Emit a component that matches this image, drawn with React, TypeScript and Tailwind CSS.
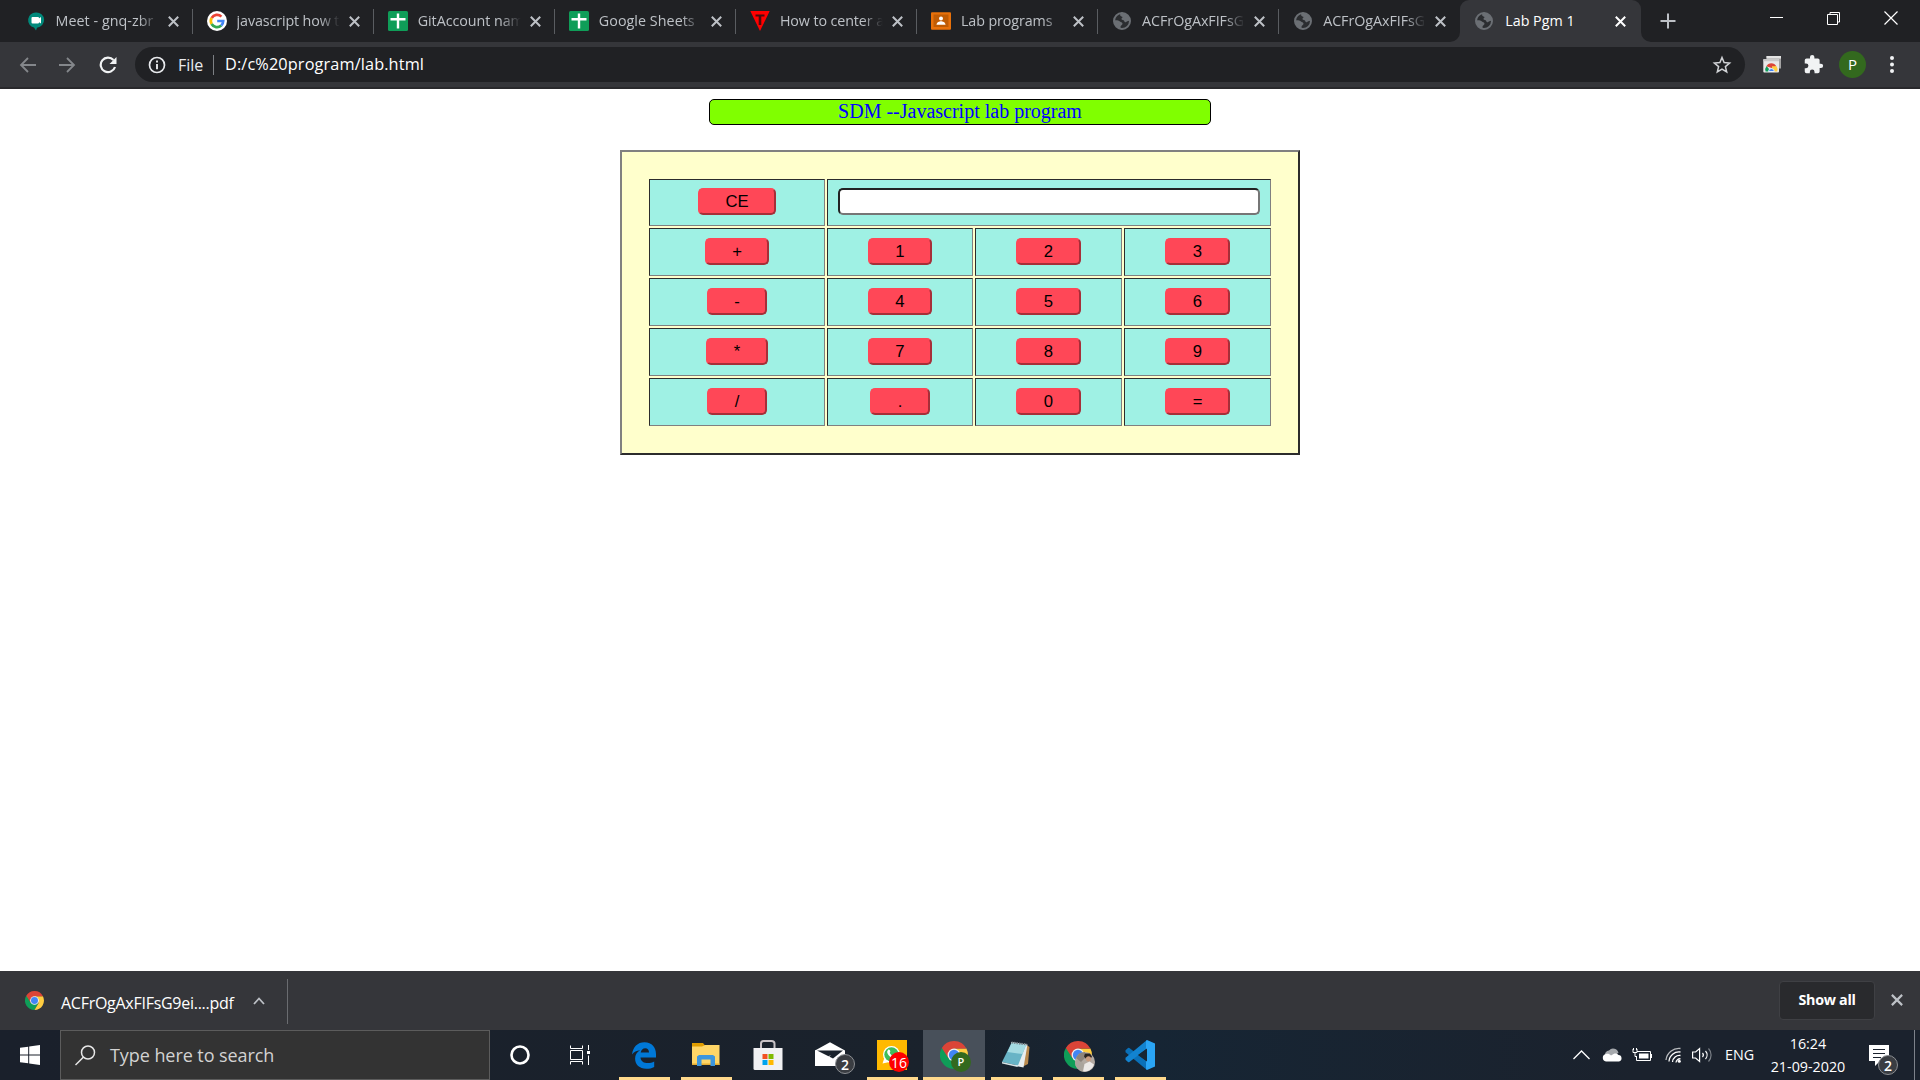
import React from "react";

const ui = "font-['Open_Sans','Noto_Sans',sans-serif]";

function Cross({ size = 11, color = "#bdc1c6", w = 2 }: { size?: number; color?: string; w?: number }) {
  return (
    <svg width={size} height={size} viewBox="0 0 11 11" className="block shrink-0">
      <path d="M.8.8 10.2 10.2M10.2.8.8 10.2" stroke={color} strokeWidth={w} fill="none" />
    </svg>
  );
}

function ChromeLogo({ size }: { size: number }) {
  return (
    <svg width={size} height={size} viewBox="0 0 48 48" className="block">
      <path d="M24 24 3.2 12A24 24 0 0 0 24 48l10-18z" fill="#0f9d58" />
      <path d="M24 13h21.3A24 24 0 0 1 24 48l10.4-18z" fill="#ffcd40" />
      <path d="M3.2 12A24 24 0 0 1 45.3 13H24L14.5 29.5z" fill="#db4437" />
      <circle cx="24" cy="24" r="11" fill="#f1f1f1" />
      <circle cx="24" cy="24" r="8.8" fill="#4285f4" />
    </svg>
  );
}

function MeetIcon() {
  return (
    <svg width="20" height="20" viewBox="0 0 20 20">
      <path d="M10 1.500a7.600 7.600 0 0 0-2 15L10 19.500l1-2.800a7.600 7.600 0 0 0-1-15.200z" fill="#00897b" />
      <path d="M12 8l3-2v6.500l-3-2z" fill="#fff" />
      <rect x="5.500" y="6" width="7.500" height="6.500" rx="1" fill="#fff" />
    </svg>
  );
}

function GoogleIcon() {
  return (
    <svg width="20" height="20" viewBox="0 0 20 20">
      <circle cx="10" cy="10" r="10" fill="#fff" />
      <g fill="none" strokeWidth="2.7">
        <path d="M4.7 7A6.2 6.2 0 0 1 14.4 5.6" stroke="#ea4335" />
        <path d="M4.6 13A6.2 6.2 0 0 1 4.6 7" stroke="#fbbc05" />
        <path d="M14.2 14.5A6.2 6.2 0 0 1 4.6 13" stroke="#34a853" />
        <path d="M10.2 10h6a6.2 6.2 0 0 1-2 4.5" stroke="#4285f4" />
      </g>
    </svg>
  );
}

function SheetsIcon() {
  return (
    <svg width="20" height="20" viewBox="0 0 20 20">
      <rect width="20" height="20" rx="1.5" fill="#0f9d58" />
      <path d="M2.5 8.2h15M10 2.5v15" stroke="#fff" strokeWidth="2.4" />
    </svg>
  );
}

function TriangleIcon() {
  return (
    <svg width="20" height="20" viewBox="0 0 20 20">
      <path d="M.3 0h19.4L10 20z" fill="#f00" />
      <path d="M5.5 3.5h9v2h-3.2v8.5H8.7V5.500H5.500z" fill="#4a0b0d" />
    </svg>
  );
}

function ClassroomIcon() {
  return (
    <svg width="20" height="20" viewBox="0 0 20 20">
      <rect y="1.300" width="20" height="17.500" rx="1" fill="#e8710a" />
      <rect x="2.500" y="3.500" width="15" height="12.500" fill="#c05c04" />
      <circle cx="10" cy="7.500" r="2" fill="#fff" />
      <path d="M5.500 13.800c0-2.500 3-3.500 4.500-3.500s4.500 1 4.500 3.500z" fill="#fff" />
    </svg>
  );
}

function GlobeIcon() {
  return (
    <svg width="20" height="20" viewBox="0 0 20 20">
      <circle cx="10" cy="10" r="8" fill="#2b2d30" stroke="#6b6f74" strokeWidth="2" />
      <path
        d="M9.500 2C13.500 2 17 5 17.800 9c-.8 1.500-2.300.8-3.300 1.800-.9.900-2 .2-2.300-.9C11.800 8.700 10 9.300 9.500 8.200c-.4-1 1.300-1.200 1-2.200-.3-.9-1.800-.5-2.300-1.600C7.800 3.500 8.500 2.500 9.500 2zM2 9c1.800.3 4.800 0 6 1.500.6.900 2.300.6 2.500 1.900.2 1.300-1.300 1.600-1.800 2.500-.4.900.2 2-.5 2.900C4.500 17 1.800 13.500 2 9z"
        fill="#6b6f74"
      />
    </svg>
  );
}

const tabs = [
  { icon: <MeetIcon />, title: "Meet - gnq-zbr", cls: "tracking-[0.05px]" },
  { icon: <GoogleIcon />, title: "javascript how t", cls: "tracking-[-0.12px]" },
  { icon: <SheetsIcon />, title: "GitAccount nam", cls: "tracking-[-0.05px]" },
  { icon: <SheetsIcon />, title: "Google Sheets", cls: "tracking-[0.05px]" },
  { icon: <TriangleIcon />, title: "How to center a", cls: "tracking-[-0.1px]" },
  { icon: <ClassroomIcon />, title: "Lab programs", cls: "tracking-[-0.1px]" },
  { icon: <GlobeIcon />, title: "ACFrOgAxFIFsG", cls: "tracking-[-0.05px]" },
  { icon: <GlobeIcon />, title: "ACFrOgAxFIFsG", cls: "tracking-[-0.05px]" },
];

function TabStrip() {
  return (
    <div className="flex h-[42px] bg-[#202124] pl-[11.500px] text-[14.3px]">
      {tabs.map((t, i) => (
        <div key={i} className="flex h-[42px] w-[181.1px] shrink-0 items-center pl-[14px]">
          <div className="flex w-5 shrink-0 justify-center">{t.icon}</div>
          <div
            className={`-mt-px ml-[10px] w-[106px] shrink-0 overflow-hidden whitespace-nowrap text-[#bdc1c6] [mask-image:linear-gradient(to_right,black_78%,transparent_97%)] ${t.cls}`}
          >
            {t.title}
          </div>
          <div className="ml-[6px]">
            <Cross />
          </div>
          <div className={i < 7 ? "ml-auto h-[25px] w-px bg-[#5a5d61]" : "hidden"} />
        </div>
      ))}
      <div className="relative flex h-[42px] w-[181px] shrink-0 items-center rounded-t-[9px] bg-[#35363a] pl-[14px]">
        <svg className="absolute bottom-0 left-[-10px]" width="10" height="10">
          <path d="M10 0v10H0A10 10 0 0 0 10 0z" fill="#35363a" />
        </svg>
        <svg className="absolute right-[-10px] bottom-0" width="10" height="10">
          <path d="M0 0v10h10A10 10 0 0 1 0 0z" fill="#35363a" />
        </svg>
        <GlobeIcon />
        <div className="-mt-px ml-[11px] w-[110px] whitespace-nowrap text-white">Lab Pgm 1</div>
        <Cross color="#ffffff" />
      </div>
      <svg className="mt-[13px] ml-[19px] shrink-0" width="16" height="16">
        <path d="M8 .5v15M.5 8h15" stroke="#bdc1c6" strokeWidth="2" />
      </svg>
      <div className="mt-[11px] mr-[22px] ml-auto flex gap-[43px]">
        <svg width="14" height="14">
          <path d="M0 6.500h13" stroke="#fff" />
        </svg>
        <svg width="14" height="14">
          <path d="M.5 3.500h10v10h-10zM3 3V1.500h9.500V11H11" stroke="#fff" fill="none" />
        </svg>
        <svg width="14" height="14">
          <path d="M.5.500l13 13M13.500.500l-13 13" stroke="#fff" strokeWidth="1.200" />
        </svg>
      </div>
    </div>
  );
}

function Toolbar() {
  return (
    <div className="flex h-[47px] items-start border-b-2 border-[#29292c] bg-[#35363a] pt-[5px]">
      <div className="flex h-[35px] w-[135px] shrink-0 items-center pl-[19px]">
        <svg width="17" height="16" viewBox="0 0 17 16">
          <path d="M17 8H2M9 1 2 8l7 7" stroke="#84878b" strokeWidth="1.800" fill="none" />
        </svg>
        <svg className="ml-[23px]" width="17" height="16" viewBox="0 0 17 16">
          <path d="M0 8h15M8 1l7 7-7 7" stroke="#84878b" strokeWidth="1.800" fill="none" />
        </svg>
        <svg className="ml-[23px]" width="18" height="18" viewBox="0 0 18 18">
          <path d="M14.500 4A7.300 7.300 0 1 0 16 11" stroke="#f1f3f4" strokeWidth="2.200" fill="none" />
          <path d="M17.500 1v7h-7z" fill="#f1f3f4" />
        </svg>
      </div>
      <div className="flex h-[35px] w-[1610px] shrink-0 items-center rounded-full bg-[#202124] pr-[13px] pl-[13px] text-[16px]">
        <svg width="18" height="18" viewBox="0 0 18 18">
          <circle cx="9" cy="9" r="7.500" stroke="#e8eaed" strokeWidth="1.700" fill="none" />
          <path d="M9 8v5.200M9 4.600v1.900" stroke="#e8eaed" strokeWidth="1.900" />
        </svg>
        <div className="ml-[12px] w-[35px] whitespace-nowrap text-[#e8eaed]">File</div>
        <div className="h-5 w-px bg-[#7d8084]" />
        <div className="ml-[11px] text-[16.300px] tracking-[0.12px] whitespace-nowrap text-white">D:/c%20program/lab.html</div>
        <svg className="ml-auto" width="20" height="20" viewBox="0 0 20 20">
          <path
            d="m10 2.500 2.100 5.100 5.500.4-4.200 3.600 1.300 5.400L10 14.100 5.300 17l1.300-5.400L2.400 8l5.500-.4z"
            stroke="#d0d2d5"
            strokeWidth="1.500"
            fill="none"
          />
        </svg>
      </div>
      <div className="flex h-[35px] items-center">
        <svg className="ml-[18px]" width="18" height="17" viewBox="0 0 18 17">
          <path d="M3.500 0H18v12.500H3.500z" fill="#a3a3a3" />
          <path d="M3.500 0H18v2.500H3.500z" fill="#e4e4e4" />
          <rect x=".3" y="3" width="15.700" height="13.500" rx="1" fill="#e9e9e9" />
          <path d="M.300 3.800q0-.8.8-.8h14q.900 0 .900.800v1.400H.300z" fill="#c9c9c9" />
          <path d="M2.600 15.500a5.800 5.800 0 0 1 1-5.500L8 15.500z" fill="#0f9d58" />
          <path d="M3.300 10.300a5.700 5.700 0 0 1 10 0L8.500 12z" fill="#db4437" />
          <path d="M9 10.300h4.600a5.800 5.800 0 0 1 .6 5.200H9z" fill="#ffcd40" />
          <path d="M5.500 15.500a2.900 2.900 0 1 1 5.800 0z" fill="#4285f4" stroke="#fff" strokeWidth=".8" />
        </svg>
        <svg className="ml-[22px]" width="21" height="21" viewBox="0 0 24 24">
          <path
            d="M20.500 11H19V7a2 2 0 0 0-2-2h-4V3.500a2.500 2.500 0 0 0-5 0V5H4a2 2 0 0 0-2 2v3.800h1.500a2.700 2.700 0 0 1 0 5.400H2V20a2 2 0 0 0 2 2h3.800v-1.500a2.700 2.700 0 0 1 5.400 0V22H17a2 2 0 0 0 2-2v-4h1.500a2.500 2.500 0 0 0 0-5z"
            fill="#f1f3f4"
          />
        </svg>
        <div className="ml-[15px] flex size-[27px] items-center justify-center rounded-full bg-[#33691e] text-[15px] text-white">
          P
        </div>
        <svg className="ml-[24px]" width="4" height="17" viewBox="0 0 4 17">
          <circle cx="2" cy="2" r="2" fill="#f1f3f4" />
          <circle cx="2" cy="8.500" r="2" fill="#f1f3f4" />
          <circle cx="2" cy="15" r="2" fill="#f1f3f4" />
        </svg>
      </div>
    </div>
  );
}

const cellBase =
  "flex justify-center border border-t-[#2c2c2c] border-l-[#2c2c2c] border-r-[#808080] border-b-[#808080] bg-[#9ff1e4]";
const keyBase =
  "h-[27px] rounded-[5px] border-2 border-t-[#ff4757] border-l-[#ff4757] border-r-[#a72e38] border-b-[#a72e38] bg-[#ff4757] text-[16.670px] leading-[22px] text-black text-center";

const keys: [string, string][][] = [
  [["+", "w-[64px]"], ["1", "w-[64px]"], ["2", "w-[65px]"], ["3", "w-[65px]"]],
  [["-", "w-[60px]"], ["4", "w-[64px]"], ["5", "w-[65px]"], ["6", "w-[65px]"]],
  [["*", "w-[62px]"], ["7", "w-[64px]"], ["8", "w-[65px]"], ["9", "w-[65px]"]],
  [["/", "w-[60px]"], [".", "w-[60px]"], ["0", "w-[65px]"], ["=", "w-[65px]"]],
];

function Calculator() {
  return (
    <div className="mx-auto mt-[25px] h-[305px] w-[680px] border-2 border-t-[#808080] border-l-[#808080] border-r-[#2c2c2c] border-b-[#2c2c2c] bg-[#ffffcc] p-[27px] font-['Liberation_Sans',sans-serif]">
      <div className="grid grid-cols-[176px_146px_147px_147px] grid-rows-[47px_48px_48px_48px_48px] gap-[2px]">
        <div className={`${cellBase} pt-[8px]`}>
          <button className={`${keyBase} w-[78px]`}>CE</button>
        </div>
        <div className={`${cellBase} col-span-3 px-[10px] pt-[8px]`}>
          <div className="h-[27px] w-full rounded-[5px] border-2 border-t-[#222] border-l-[#222] border-r-[#767676] border-b-[#767676] bg-white" />
        </div>
        {keys.map((row) =>
          row.map(([k, w]) => (
            <div key={k} className={`${cellBase} pt-[9px]`}>
              <button className={`${keyBase} ${w}`}>{k}</button>
            </div>
          )),
        )}
      </div>
    </div>
  );
}

function DownloadBar() {
  return (
    <div className="flex h-[59px] items-center bg-[#35363a] text-white">
      <div className="-mt-px ml-[25px]">
        <ChromeLogo size={19} />
      </div>
      <div className="mt-[5px] ml-[17px] w-[192px] text-[16px] tracking-[-0.27px] whitespace-nowrap">ACFrOgAxFIFsG9ei....pdf</div>
      <svg width="12" height="8" viewBox="0 0 12 8">
        <path d="M1 7l5-5.500L11 7" stroke="#bdc1c6" strokeWidth="1.800" fill="none" />
      </svg>
      <div className="ml-[22px] mt-[2px] h-[45px] w-px bg-[#6a6c70]" />
      <div className="mr-[16px] ml-auto flex h-[39px] w-24 items-center justify-center rounded-[4px] border border-[#3f4044] bg-[#292a2d] pb-[2px] text-[14.300px] font-bold tracking-[-0.3px]">
        Show all
      </div>
      <div className="mr-[17px] -mt-px">
        <Cross size={12} />
      </div>
    </div>
  );
}

function TaskItem({ children, on, active }: { children?: React.ReactNode; on?: boolean; active?: boolean }) {
  return (
    <div className={`relative flex h-[50px] w-[62px] shrink-0 justify-center ${active ? "bg-[#48505a]" : ""}`}>
      <div className="relative mt-[10px] size-[30px]">{children}</div>
      {on && (
        <div className={`absolute bottom-0 h-[3px] bg-[#ffd98c] ${active ? "inset-x-0" : "inset-x-[5.500px]"}`} />
      )}
    </div>
  );
}

const badge = "absolute flex size-5 items-center justify-center rounded-full text-white";

function Taskbar() {
  return (
    <div className="flex h-[50px] bg-[linear-gradient(90deg,#1a202b,#1a222c_50%,#162534_60%,#1b222d_85%)] text-white">
      <div className="flex w-[60px] shrink-0 items-center justify-center">
        <svg width="20" height="20" viewBox="0 0 20 20">
          <path d="M0 2.800 8.200 1.700v7.800H0zM9.200 1.500 20 0v9.500H9.200zM0 10.500h8.200v7.800L0 17.200zM9.200 10.500H20V20L9.200 18.500z" fill="#fff" />
        </svg>
      </div>
      <div className="flex w-[430px] shrink-0 items-center border border-[#5c5c5c] bg-[#333333] pl-[14px]">
        <svg width="21" height="21" viewBox="0 0 21 21">
          <circle cx="13" cy="7.500" r="6.500" stroke="#e8e8e8" strokeWidth="1.500" fill="none" />
          <path d="M8.300 12.200.500 20" stroke="#e8e8e8" strokeWidth="1.500" />
        </svg>
        <div className="ml-[14px] text-[18px] tracking-[-0.07px] whitespace-nowrap text-[#d2d2d2]">Type here to search</div>
      </div>
      <div className="flex w-[60px] shrink-0 items-center justify-center">
        <svg width="20" height="20">
          <circle cx="10" cy="10" r="8.500" stroke="#fff" strokeWidth="2.600" fill="none" />
        </svg>
      </div>
      <div className="mr-[3px] flex w-[60px] shrink-0 items-center justify-center">
        <svg width="20" height="20" viewBox="0 0 20 20">
          <path d="M.500.500v3h12v-3M.500 19.500v-3h12v3M.500 5.500h12v9H.500zM18.500 0v5M18.500 10.500V20" stroke="#fff" fill="none" />
          <rect x="17" y="6" width="3" height="3" fill="#fff" />
        </svg>
      </div>
      <TaskItem on>
        <svg width="30" height="30" viewBox="0 0 30 30">
          <path
            d="M3 14.500C4 7 8.500 2.200 15.500 2.200c7.500 0 11.500 5.200 11.500 12v3.300H11.500c.3 4 3.500 5.600 7.200 5.600 2.500 0 4.700-.7 6.500-1.700v5.500c-2.100 1.200-4.900 1.900-7.900 1.900-6.800 0-11.200-4-11.200-10.200 0-3.700 1.800-6.700 5-8.400C7.500 10.500 5 12 3 14.500zM11.700 12.500h8.300c0-2.600-1.200-4.300-3.800-4.300-2.400 0-4 1.700-4.500 4.300z"
            fill="#0078d7"
          />
        </svg>
      </TaskItem>
      <TaskItem on>
        <svg width="30" height="30" viewBox="0 0 30 30">
          <path d="M1 3h11l2 2.500V8H1z" fill="#e09d00" />
          <path d="M1 6.500h10L14 5h14.500v20H1z" fill="#ffd667" />
          <path d="M1 23.500h27.500V25H1z" fill="#e5ad31" />
          <path d="M6 26V16.500L8 15h14l2 1.500V26h-4.500v-6.500h-9V26z" fill="#3d96dd" />
        </svg>
      </TaskItem>
      <TaskItem>
        <svg width="30" height="30" viewBox="0 0 30 30">
          <path d="M8 9V3.500Q8 1 10.500 1h8Q21.500 1 21.500 3.500V9" stroke="#c9c3c6" strokeWidth="2" fill="none" />
          <path d="M.500 8h29v22H2Q.500 30 .500 28.500z" fill="#f1f1f3" />
          <path d="M9.500 14h5v5h-5z" fill="#f25022" />
          <path d="M15.500 14h5v5h-5z" fill="#7fba00" />
          <path d="M9.500 20h5v5h-5z" fill="#00a4ef" />
          <path d="M15.500 20h5v5h-5z" fill="#ffb900" />
        </svg>
      </TaskItem>
      <TaskItem>
        <svg width="30" height="30" viewBox="0 0 30 30">
          <path d="M0 10.500 15 2.300l15 8.200V26H0z" fill="#fff" />
          <path d="M2 10.500h26l-10 8z" fill="#1a222c" />
          <path d="M0 10.500 11.500 19 15 15.500" stroke="#fff" strokeWidth="1" fill="none" />
        </svg>
        <span className={`${badge} top-[14px] left-[20px] border border-[#8b8e92] bg-[#3a3d42] text-[14px] font-semibold`}>2</span>
      </TaskItem>
      <TaskItem on>
        <div className="size-[30px] bg-[#ffb900]">
          <svg width="30" height="30" viewBox="0 0 30 30">
            <circle cx="14.500" cy="14.500" r="8.500" fill="#fff" />
            <path d="m5.500 23.500 2-6 5 4.500z" fill="#fff" />
            <circle cx="14.500" cy="14.500" r="7.200" fill="#3fbd5b" />
            <path d="M11 10c1-1 2 0 2.300 1.300.2.800-.8 1.200-.4 1.900.8 1.300 1.800 2.200 3 2.700.8.300 1-.9 1.800-.7 1.200.3 2.200 1 1.600 2-1 1.700-3.500 1.300-5.500 0-2.300-1.600-5-5-2.800-7.200z" fill="#fff" />
          </svg>
        </div>
        <span className={`${badge} top-[12px] left-[12px] bg-[#f00] text-[14px]`}>16</span>
      </TaskItem>
      <TaskItem on active>
        <div className="mt-px ml-px">
          <ChromeLogo size={28} />
        </div>
        <span className={`${badge} top-[12px] left-[12px] bg-[#33691e] text-[11px] font-semibold`}>P</span>
      </TaskItem>
      <TaskItem on>
        <svg width="30" height="30" viewBox="0 0 30 30">
          <path d="M24 4 28.500 7l-1.500 17-6 3z" fill="#b98a4e" />
          <path d="M10 2 26.500 4.500 22.500 27.500 15 26z" fill="#e8eef0" />
          <path d="M10.500 3 25 5 17 25.500 1 22z" fill="#68b4c6" />
          <path d="M10.500 3 25 5 21.500 14 6.500 12z" fill="#a4dbe2" />
          <path d="M1 22 17 25.500l-.5 1.500L1 23.500z" fill="#d7e4e6" />
          <path d="M10.500 2.500 26 4.500" stroke="#77858b" strokeWidth="2" strokeDasharray="1.500 1" />
        </svg>
      </TaskItem>
      <TaskItem on>
        <div className="mt-px ml-px">
          <ChromeLogo size={28} />
        </div>
        <svg className="absolute top-[12px] left-[12px]" width="20" height="20" viewBox="0 0 20 20">
          <circle cx="10" cy="10" r="10" fill="#b3aaa2" />
          <path d="M0 9a10 10 0 0 0 8 10.800L9 12 4 7z" fill="#aaa49c" />
          <path d="M1 6a10 10 0 0 1 9-6v6L6 10z" fill="#8d847c" />
          <path d="M10 1.500h5l2 3-1.500 2.500-3.500 1-3-3.500z" fill="#2c2420" />
          <circle cx="13.500" cy="6.800" r="2.600" fill="#c99b7f" />
          <path d="M8 19.500 9.500 12l5-2.500 4.500 3a10 10 0 0 1-11 7z" fill="#ece9e7" />
        </svg>
      </TaskItem>
      <TaskItem on>
        <svg width="30" height="30" viewBox="0 0 30 30">
          <path d="M.500 10.200 3 8q.7-.4 1.400 0L22 21.500V30L.500 12.200z" fill="#0a70b8" />
          <path d="M.500 19.800 3 22q.7.400 1.400 0L22 8.500V0L.500 17.800z" fill="#1283d0" />
          <path d="M22 0 30 3.500v23L22 30l-1-1V1z" fill="#2aa5f5" />
          <path d="M22 8.500v13L13 15z" fill="#172634" />
        </svg>
      </TaskItem>
      <div className="ml-auto flex items-center">
        <svg width="17" height="10" viewBox="0 0 17 10">
          <path d="M.500 9l8-8 8 8" stroke="#fff" strokeWidth="1.300" fill="none" />
        </svg>
        <svg className="ml-[12px]" width="20" height="14" viewBox="0 0 20 14">
          <path d="M3 8a4.500 4.500 0 0 1 4-5.500A5.500 5.500 0 0 1 16.500 5L8 9z" fill="#a6a9ad" />
          <path d="M4 13.500A3.800 3.800 0 0 1 4 6c2-.5 3.800.3 5 1.500l3-1.700c1.800-.8 3.600-.2 4.500 1.200A3.300 3.300 0 0 1 17 13.500z" fill="#fff" />
        </svg>
        <svg className="ml-[10px]" width="20" height="14" viewBox="0 0 20 14">
          <path d="M5 3.500h13.500v9H4.500v-4M1 1v3.500h4V1M3 5v3.500h2M1.500 0v2M4.500 0v2" stroke="#fff" fill="none" />
          <path d="M7 5.500h9.500v5H7zM18.500 6H20v4h-1.500z" fill="#fff" />
        </svg>
        <svg className="ml-[13px]" width="17" height="16" viewBox="0 0 17 16">
          <g fill="none" stroke="#b7babd" strokeWidth="1.300">
            <path d="M1 13A13 13 0 0 1 15.500 1.500" />
            <path d="M4 14.500A10 10 0 0 1 15.500 5" stroke="#fff" />
            <path d="M7.500 15A7 7 0 0 1 15.500 8.500" stroke="#fff" />
            <path d="M11 15.500a4 4 0 0 1 4.500-3.700" stroke="#fff" />
          </g>
          <circle cx="14.300" cy="14.300" r="1.500" fill="#fff" />
        </svg>
        <svg className="ml-[10px]" width="21" height="18" viewBox="0 0 21 18">
          <g fill="none" stroke="#fff" strokeWidth="1.200">
            <path d="M.600 6v6h3l4 3.500v-13L3.600 6z" />
            <path d="M10.500 7a3 3 0 0 1 0 4M13.500 5a6 6 0 0 1 0 8" />
            <path d="M16.500 2.500a9.500 9.500 0 0 1 0 13" stroke="#7b8087" />
          </g>
        </svg>
        <div className="ml-[12px] w-[30px] text-[14.300px] whitespace-nowrap">ENG</div>
        <div className="ml-[8px] w-[90px] text-center text-[14.300px] leading-[23px] whitespace-nowrap">
          <div>16:24</div>
          <div>21-09-2020</div>
        </div>
        <div className="relative ml-[16px] h-5 w-[45px]">
          <svg width="20" height="22" viewBox="0 0 20 22">
            <path d="M0 0h20v16h-9l-5 5v-5H0z" fill="#fff" />
            <path d="M4 4.500h12M4 8.500h12M4 12.500h8" stroke="#1b222d" strokeWidth="1.200" />
          </svg>
          <span className={`${badge} top-[10px] left-[9px] border border-[#8b8e92] bg-[#3a3d42] text-[14px] font-semibold`}>2</span>
        </div>
        <div className="mr-[5px] h-[50px] w-px bg-[#7d828a]" />
      </div>
    </div>
  );
}

export default function App() {
  return (
    <div className={`flex h-[1080px] w-[1920px] flex-col overflow-hidden bg-white ${ui}`}>
      <TabStrip />
      <Toolbar />
      <div className="flex-1 bg-white pt-[10px]">
        <div className="mx-auto h-[26px] w-[502px] rounded-[5px] border border-black bg-[#80ff00] text-center font-['Liberation_Serif',serif] text-[20px] leading-[22px] text-[#0000ff]">
          SDM --Javascript lab program
        </div>
        <Calculator />
      </div>
      <DownloadBar />
      <Taskbar />
    </div>
  );
}
